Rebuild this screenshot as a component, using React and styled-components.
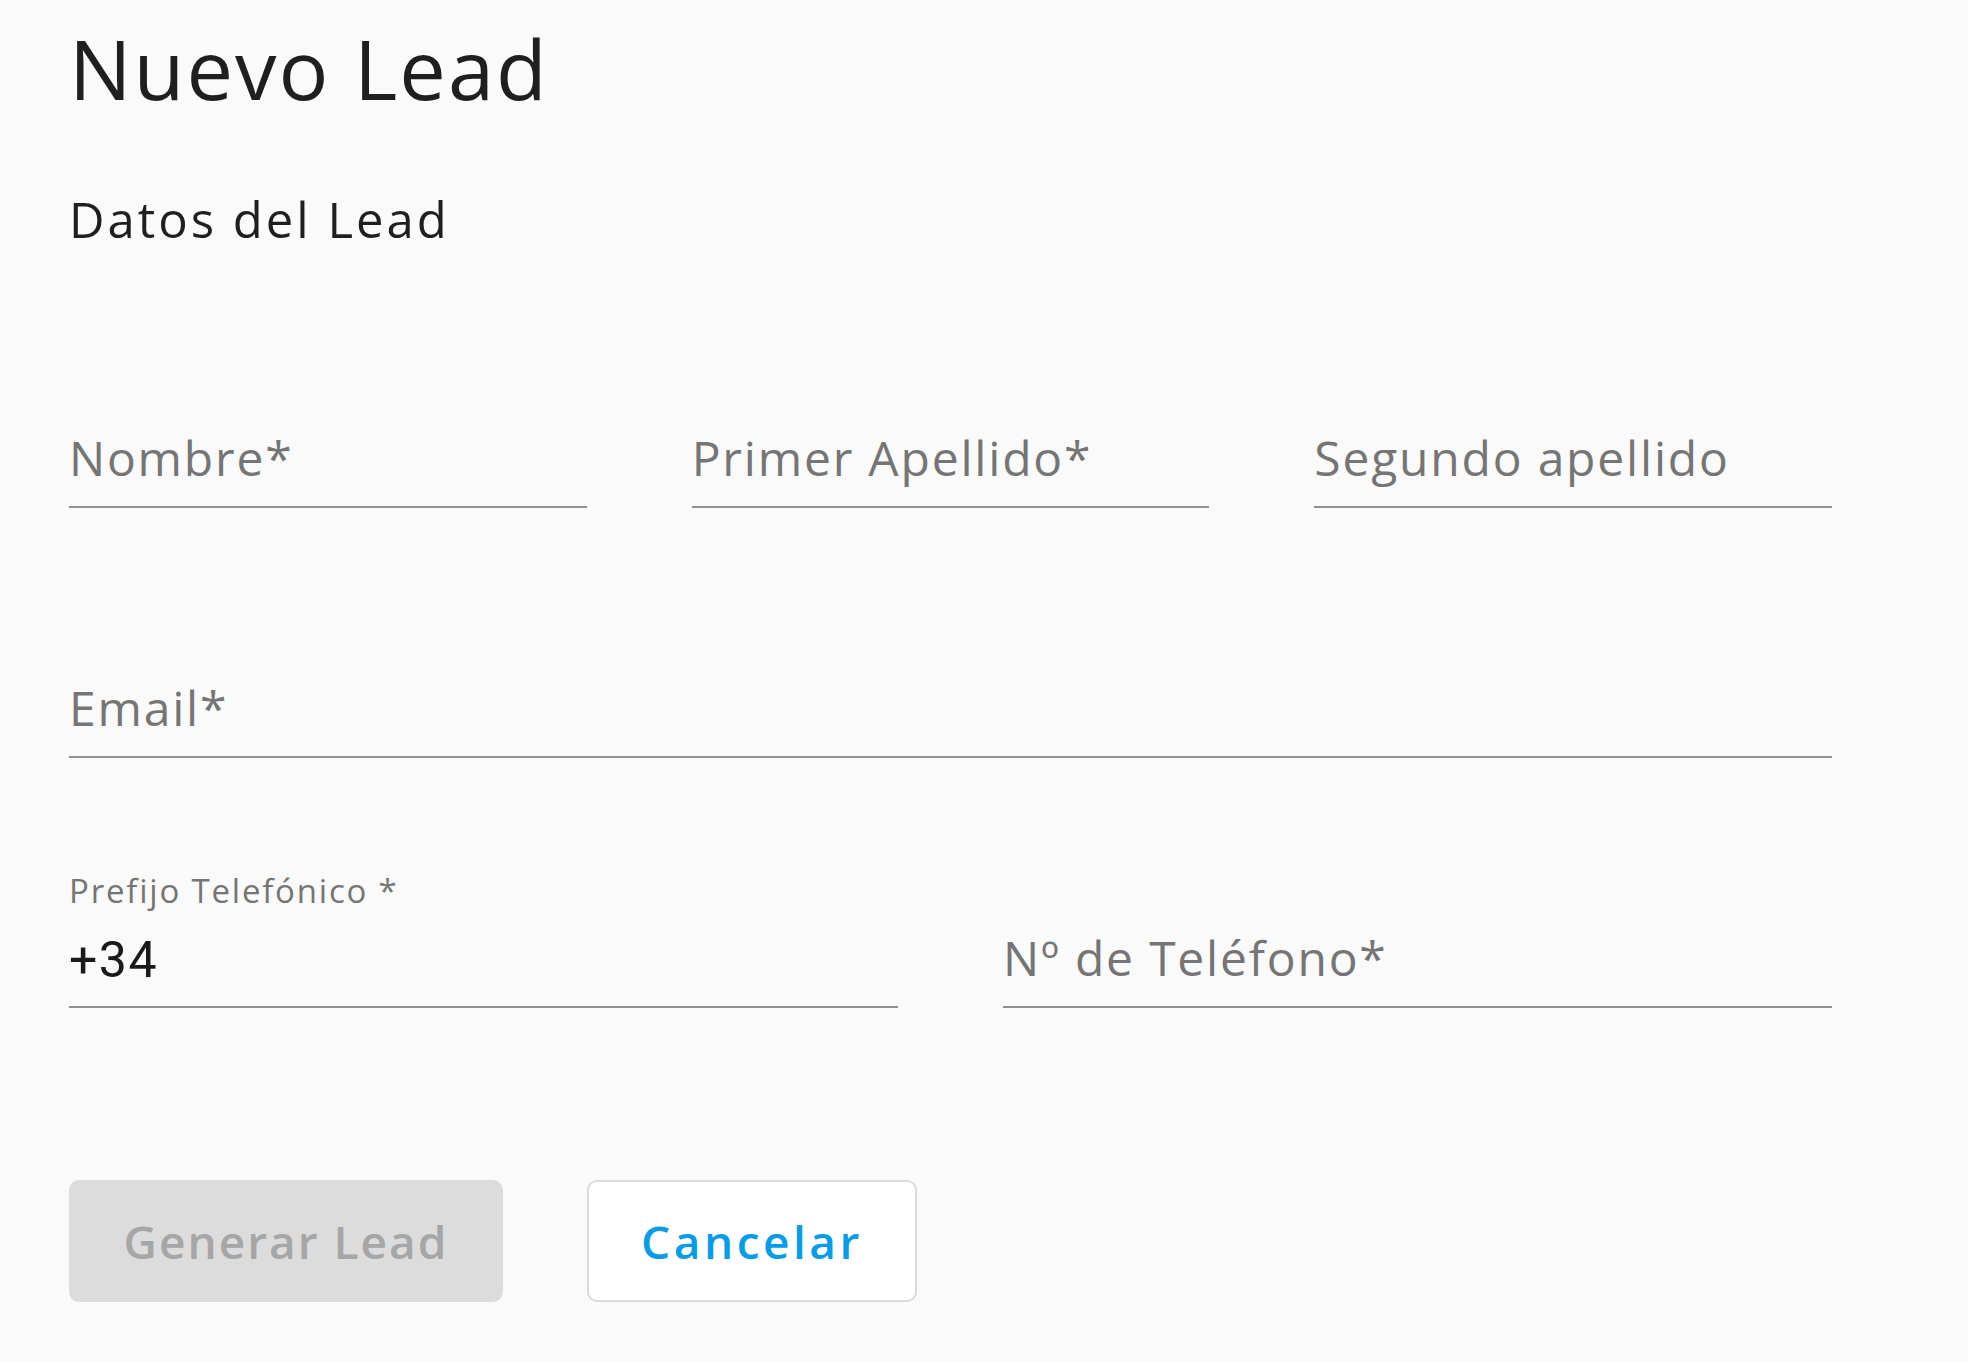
import React from "react";
import styled, { createGlobalStyle } from "styled-components";

const GlobalStyle = createGlobalStyle`
  html, body {
    margin: 0;
    padding: 0;
    background: #fafafa;
  }
  body {
    font-family: "Open Sans", "Liberation Sans", sans-serif;
    color: #212121;
  }
  * { box-sizing: border-box; }
`;

const Page = styled.div`
  min-height: 1362px;
  background: #fafafa;
  padding: 18px 69px 0 69px;
  display: flex;
  flex-direction: column;
`;

const Title = styled.h1`
  margin: 0;
  font-size: 83px;
  line-height: 100px;
  font-weight: 400;
  letter-spacing: 2px;
  color: #1f1f1f;
`;

const Subtitle = styled.h2`
  margin: 71px 0 0 0;
  font-size: 49px;
  line-height: 60px;
  font-weight: 400;
  letter-spacing: 3px;
  color: #1f1f1f;
`;

const Form = styled.div`
  width: 1763px;
  margin-top: 139px;
  display: flex;
  flex-direction: column;
  gap: 130px;
`;

const Row = styled.div`
  display: grid;
  grid-template-columns: ${(p) => p.$cols};
  column-gap: 105px;
`;

const FieldBox = styled.div`
  height: 120px;
  display: flex;
  flex-direction: column;
  justify-content: flex-end;
  border-bottom: 2px solid #8f8f8f;
`;

const SmallLabel = styled.div`
  font-size: 33px;
  line-height: 40px;
  letter-spacing: 1.8px;
  color: #757575;
  margin-bottom: 19px;
`;

const Placeholder = styled.div`
  font-size: 48px;
  line-height: 60px;
  letter-spacing: 1.8px;
  color: #757575;
  padding-bottom: 18px;
  white-space: nowrap;
`;

const Value = styled.div`
  font-family: Roboto, "Liberation Sans", sans-serif;
  font-size: 50px;
  line-height: 60px;
  letter-spacing: 1.5px;
  color: #1a1a1a;
  padding-bottom: 16px;
`;

const Actions = styled.div`
  margin-top: 172px;
  display: flex;
  gap: 84px;
`;

const Button = styled.button`
  width: ${(p) => p.$w}px;
  height: 122px;
  border-radius: 10px;
  font-family: "Open Sans", "Liberation Sans", sans-serif;
  font-size: 46px;
  font-weight: 600;
  letter-spacing: ${(p) => (p.$variant === "outline" ? "3.5px" : "2px")};
  display: flex;
  align-items: center;
  justify-content: center;
  padding: 0;
  cursor: ${(p) => (p.disabled ? "default" : "pointer")};
  background: ${(p) => (p.$variant === "outline" ? "#ffffff" : "#dcdcdc")};
  color: ${(p) => (p.$variant === "outline" ? "#059ce8" : "#a6a6a6")};
  border: ${(p) => (p.$variant === "outline" ? "2px solid #dadada" : "none")};
`;

function Field({ label, shrink, value }) {
  return (
    <FieldBox>
      {shrink ? (
        <>
          <SmallLabel>{label}</SmallLabel>
          <Value>{value}</Value>
        </>
      ) : (
        <Placeholder>{label}</Placeholder>
      )}
    </FieldBox>
  );
}

export default function App() {
  return (
    <>
      <GlobalStyle />
      <Page>
        <Title>Nuevo Lead</Title>
        <Subtitle>Datos del Lead</Subtitle>
        <Form>
          <Row $cols="1fr 1fr 1fr">
            <Field label="Nombre*" />
            <Field label="Primer Apellido*" />
            <Field label="Segundo apellido" />
          </Row>
          <Row $cols="1fr">
            <Field label="Email*" />
          </Row>
          <Row $cols="1fr 1fr">
            <Field label="Prefijo Telefónico *" shrink value="+34" />
            <Field label="Nº de Teléfono*" />
          </Row>
        </Form>
        <Actions>
          <Button $w={434} disabled>Generar Lead</Button>
          <Button $w={330} $variant="outline">Cancelar</Button>
        </Actions>
      </Page>
    </>
  );
}
